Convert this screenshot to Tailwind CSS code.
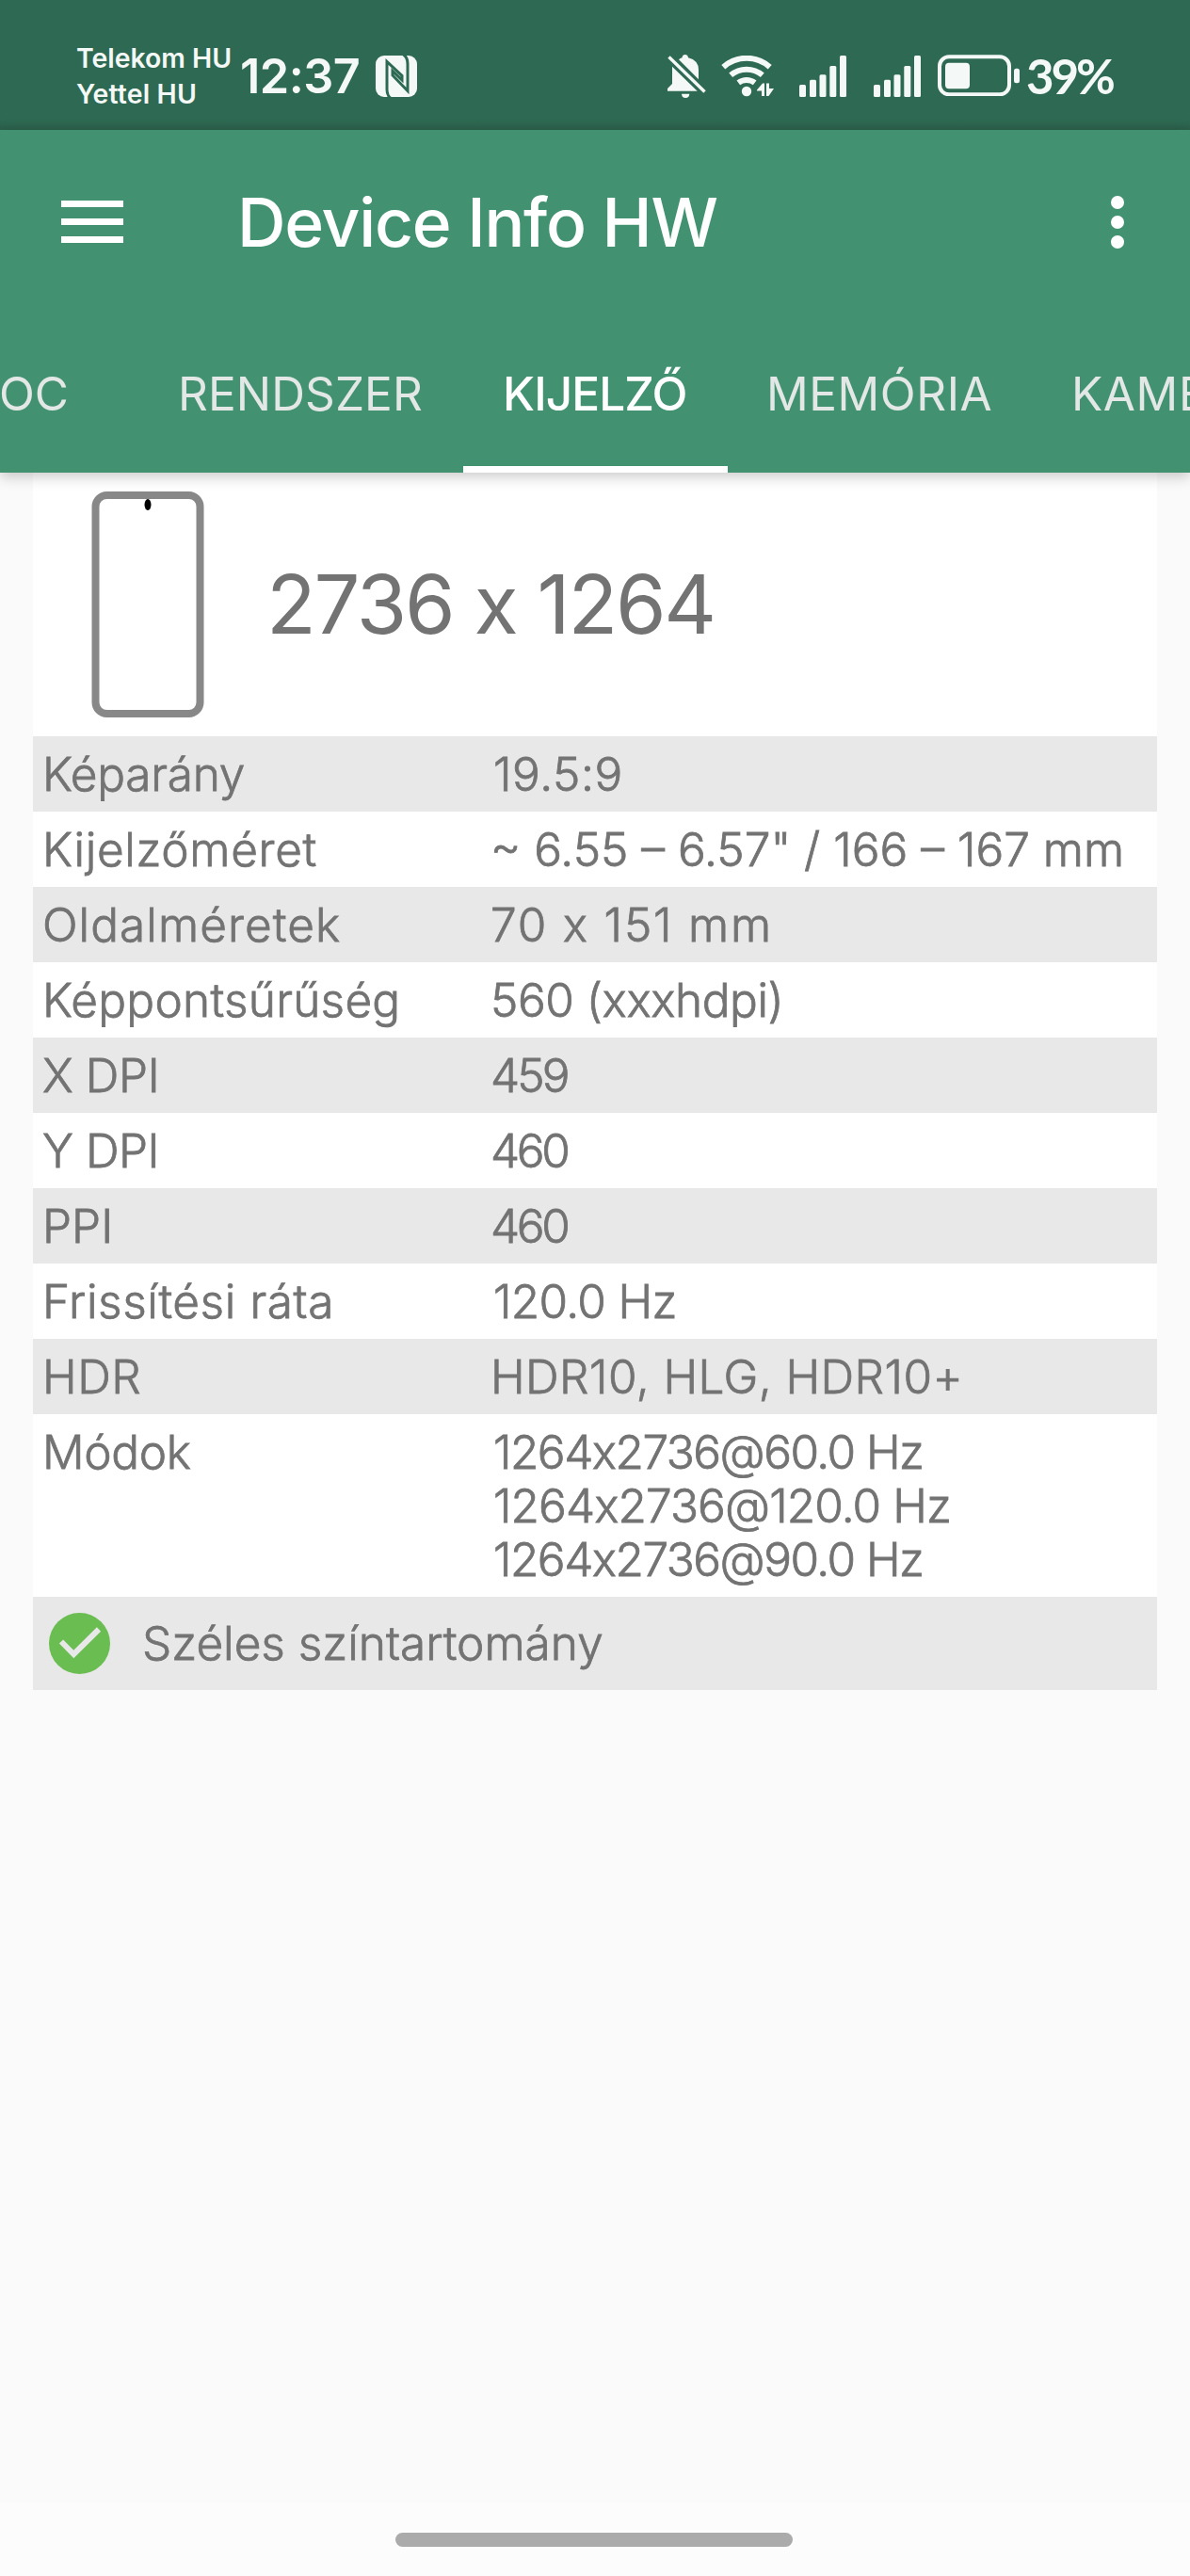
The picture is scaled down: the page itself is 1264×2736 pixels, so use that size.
<!DOCTYPE html>
<html lang="hu">
<head>
  <meta charset="UTF-8" />
  <meta name="viewport" content="width=device-width, initial-scale=1.0" />
  <title>Device Info HW</title>
  <script src="https://cdn.jsdelivr.net/npm/@tailwindcss/browser@4"></script>
</head>
<body class="bg-[#fafafa] font-[Inter,sans-serif] w-[1264px] h-[2736px] flex flex-col overflow-hidden">

  <!-- Status bar -->
  <div class="h-[138px] shrink-0 bg-linear-to-b from-[#2e6a53] from-92% to-[#2b604c] text-[#f4f8f6] flex items-start whitespace-nowrap">
    <div class="w-[174px] ml-[81px] pt-[43px] text-[28.4px] leading-[38px] font-semibold">
      <div>Telekom HU</div>
      <div class="tracking-[0.16px]">Yettel HU</div>
    </div>
    <div class="w-[144px] pt-[51px] text-[50.4px] leading-[60px] font-semibold tracking-[-0.5px]">12:37</div>
    <!-- NFC -->
    <svg class="w-11 h-11 mt-[59px]" viewBox="0 0 44 44" fill="none">
      <rect width="44" height="44" rx="9" fill="currentColor" />
      <path d="M15.5 45 Q12 42 12 36 V6.5 L28 21.5 V26 L18 16.5 V21 L34 37.5 V9 Q34 2 29.5 -1" stroke="#2e6a53" stroke-width="3" />
    </svg>
    <div class="flex mt-[58px] ml-[266px]">
      <!-- Muted bell -->
      <svg class="w-[42px] h-[46px]" viewBox="0 0 42 46" fill="currentColor">
        <path d="M5 12.7 L31.7 38.7 H0 V36 L5 31 Z" />
        <path d="M12 5.3 Q13.5 3.8 15.5 3.2 Q16 0 18.7 0 Q21.5 0 22 3.2 Q33 6 33 16 V26.3 Z" />
        <path d="M1.5 2.5 L39.5 39.5" stroke="currentColor" stroke-width="3.4" />
        <path d="M15 41.7 H23.3 Q23 46 19.2 46 Q15.3 46 15 41.7 Z" />
      </svg>
      <!-- Wifi -->
      <svg class="w-14 h-[44px] mt-px ml-[15px]" viewBox="0 0 56 44" fill="none" stroke="currentColor" stroke-width="6">
        <path d="M2.3 12.2 A37 37 0 0 1 51.7 12.2" />
        <path d="M10.2 20.8 A26 26 0 0 1 43.8 20.8" />
        <path d="M18.3 28.8 A14.5 14.5 0 0 1 35.7 28.8" />
        <circle cx="27" cy="38" r="5.2" fill="currentColor" stroke="none" />
        <path d="M38 36.5 L44 29.5 H46 V43 H43 V37.5 H38 Z M48 29.5 H51 V35 H56 L50.5 43 H48 Z" fill="currentColor" stroke="none" />
      </svg>
      <!-- Signal, one per SIM -->
      <svg class="w-[50px] h-[44px] mt-px ml-[27px]" viewBox="0 0 50 44" fill="currentColor">
        <rect x="0" y="31" width="7" height="13" rx="1.5" />
        <rect x="11" y="25.7" width="7" height="18.3" rx="1.5" />
        <rect x="21.5" y="20.3" width="7" height="23.7" rx="1.5" />
        <rect x="32.3" y="11" width="7" height="33" rx="1.5" />
        <rect x="43" y="0" width="7" height="44" rx="1.5" />
      </svg>
      <svg class="w-[50px] h-[44px] mt-px ml-[29px]" viewBox="0 0 50 44" fill="currentColor">
        <rect x="0" y="31" width="7" height="13" rx="1.5" />
        <rect x="11" y="25.7" width="7" height="18.3" rx="1.5" />
        <rect x="21.5" y="20.3" width="7" height="23.7" rx="1.5" />
        <rect x="32.3" y="11" width="7" height="33" rx="1.5" />
        <rect x="43" y="0" width="7" height="44" rx="1.5" />
      </svg>
      <!-- Battery -->
      <svg class="w-[88px] h-[44px] ml-[18px]" viewBox="0 0 88 44" fill="none">
        <rect x="2" y="2.3" width="74" height="40" rx="10" stroke="currentColor" stroke-width="4" />
        <rect x="8" y="8.7" width="26" height="27.6" rx="4" fill="currentColor" />
        <rect x="81" y="14.7" width="6" height="15.5" rx="2.5" fill="currentColor" />
      </svg>
    </div>
    <div class="ml-[6px] pt-[51px] text-[51px] leading-[60px] font-bold font-[Lato,sans-serif] tracking-[-3.1px]">39%</div>
  </div>

  <!-- App bar -->
  <header class="relative z-10 h-[364px] shrink-0 bg-[#429271] text-white shadow-[0_4px_14px_rgba(0,0,0,0.22)]">
    <div class="h-[196px] flex items-center pl-[65px]">
      <svg class="w-[66px] h-[45px] shrink-0 mt-[-2px]" viewBox="0 0 66 45" fill="currentColor">
        <rect width="66" height="7" />
        <rect y="19" width="66" height="7" />
        <rect y="38" width="66" height="7" />
      </svg>
      <h1 class="ml-[121px] w-[928px] text-[71.3px] leading-[86px] font-medium tracking-[-1.24px]">Device Info HW</h1>
      <svg class="w-3.5 h-14 shrink-0" viewBox="0 0 14 56" fill="currentColor">
        <circle cx="7" cy="7" r="7" />
        <circle cx="7" cy="28" r="7" />
        <circle cx="7" cy="49" r="7" />
      </svg>
    </div>
    <nav class="h-[168px] flex text-[49.5px] leading-[60px] text-[#e3e8e6] whitespace-nowrap overflow-hidden">
      <div class="w-[190px] shrink-0 pt-[54px] ml-[-1px]">OC</div>
      <div class="w-[303px] shrink-0 pt-[54px] tracking-[0.1px]">RENDSZER</div>
      <div class="w-[281px] shrink-0 pt-[54px] pl-[42px] border-b-7 border-white text-white font-medium tracking-[-0.9px]">KIJELZŐ</div>
      <div class="w-[365px] shrink-0 pt-[54px] pl-[41px] tracking-[0.55px]">MEMÓRIA</div>
      <div class="shrink-0 pt-[54px] tracking-[0.6px]">KAME</div>
    </nav>
  </header>

  <main class="mx-[35px] text-[49.5px] leading-[57px] font-light text-[#737373] [-webkit-text-stroke:0.8px_#737373] whitespace-nowrap">
    <!-- Resolution -->
    <div class="h-[280px] bg-white flex items-center pl-[62px]">
      <svg class="w-[120px] h-60" viewBox="0 0 120 240" fill="none">
        <rect x="4.5" y="4" width="111" height="232" rx="12" stroke="#888888" stroke-width="8" />
        <ellipse cx="60" cy="14" rx="3.5" ry="6" fill="#000" />
      </svg>
      <div class="ml-[66px] text-[86.5px] leading-[104px] font-normal tracking-[-2.25px] [-webkit-text-stroke:0] [font-feature-settings:'calt'_0]">2736 x 1264</div>
    </div>

    <!-- Display properties -->
    <div class="flex pt-3 pb-[11px] pl-[10px] bg-[#e8e8e8]">
      <div class="w-[476px] tracking-[-0.26px]">Képarány</div>
      <div class="pl-[3px] tracking-[0.6px]">19.5:9</div>
    </div>
    <div class="flex pt-3 pb-[11px] pl-[10px] bg-white">
      <div class="w-[476px] tracking-[0.67px]">Kijelzőméret</div>
      <div>~ 6.55 – 6.57" / 166 – 167 mm</div>
    </div>
    <div class="flex pt-3 pb-[11px] pl-[10px] bg-[#e8e8e8]">
      <div class="w-[476px] tracking-[1.06px]">Oldalméretek</div>
      <div class="tracking-[1.8px] [font-feature-settings:'calt'_0]">70 x 151 mm</div>
    </div>
    <div class="flex pt-3 pb-[11px] pl-[10px] bg-white">
      <div class="w-[476px] tracking-[0.26px]">Képpontsűrűség</div>
      <div class="tracking-[-0.46px] [font-feature-settings:'calt'_0]">560 (xxxhdpi)</div>
    </div>
    <div class="flex pt-3 pb-[11px] pl-[10px] bg-[#e8e8e8]">
      <div class="w-[476px] tracking-[-0.4px]">X DPI</div>
      <div class="tracking-[-2.9px]">459</div>
    </div>
    <div class="flex pt-3 pb-[11px] pl-[10px] bg-white">
      <div class="w-[476px] tracking-[-0.5px]">Y DPI</div>
      <div class="tracking-[-3.3px]">460</div>
    </div>
    <div class="flex pt-3 pb-[11px] pl-[10px] bg-[#e8e8e8]">
      <div class="w-[476px]">PPI</div>
      <div class="tracking-[-3.3px]">460</div>
    </div>
    <div class="flex pt-3 pb-[11px] pl-[10px] bg-white">
      <div class="w-[476px] tracking-[0.58px]">Frissítési ráta</div>
      <div class="pl-[3px] tracking-[-0.65px]">120.0 Hz</div>
    </div>
    <div class="flex pt-3 pb-[11px] pl-[10px] bg-[#e8e8e8]">
      <div class="w-[476px] tracking-[0.5px]">HDR</div>
      <div class="tracking-[0.44px]">HDR10, HLG, HDR10+</div>
    </div>
    <div class="flex pt-3 pb-[11px] pl-[10px] bg-white">
      <div class="w-[476px] tracking-[-0.3px]">Módok</div>
      <div class="pl-[3px] [font-feature-settings:'calt'_0]">
        <div class="tracking-[-1.5px]">1264x2736@60.0 Hz</div>
        <div class="tracking-[-0.9px]">1264x2736@120.0 Hz</div>
        <div class="tracking-[-1.5px]">1264x2736@90.0 Hz</div>
      </div>
    </div>
    <div class="flex items-center h-[99px] pl-[17px] bg-[#e8e8e8]">
      <svg class="w-[65px] h-[65px]" viewBox="0 0 65 65" fill="none">
        <circle cx="32.5" cy="32.5" r="32.5" fill="#6abd51" />
        <path d="M13 30.5 L26.3 44 L53 17.5" stroke="#e8e8e8" stroke-width="6" />
      </svg>
      <div class="ml-[34px]">Széles színtartomány</div>
    </div>
  </main>

  <!-- Gesture bar -->
  <footer class="mt-auto h-[78px] shrink-0 bg-[#fcfcfc] flex justify-center pt-8 pr-[2px]">
    <div class="w-[422px] h-[15px] rounded-full bg-[#ababab]"></div>
  </footer>

</body>
</html>
